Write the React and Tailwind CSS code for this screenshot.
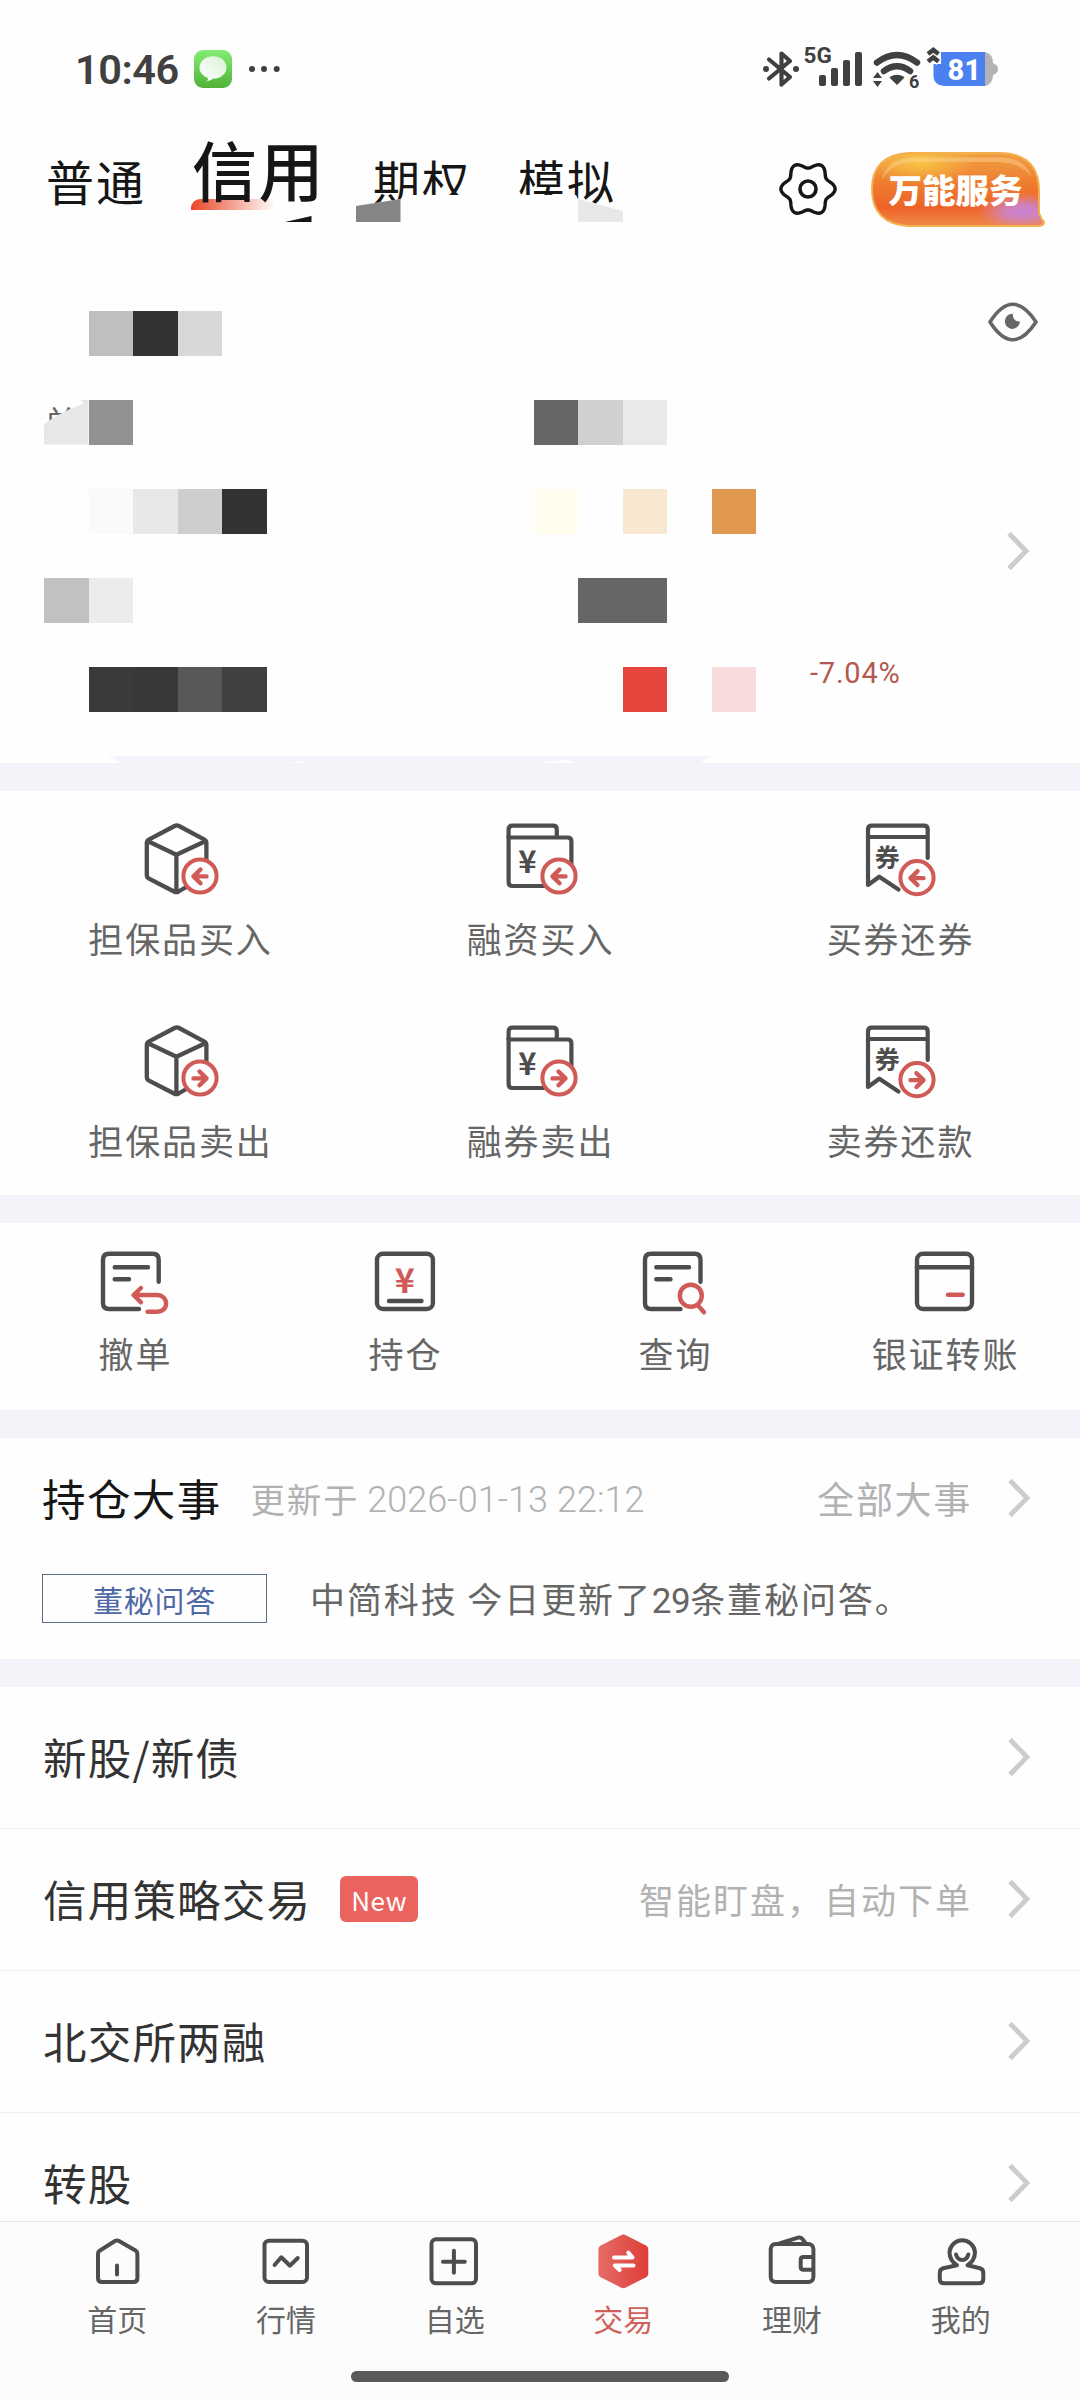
import React from "react";

const DARK = "#4d4d4d";
const RED = "#d05a55";

// Masked account figures, one entry per 44px cell (null = empty)
const maskedRows = [
  [null, null, "#bfbfbf", "#333333", "#d8d8d8"],
  [null, "label", "#929292", null, null, null, null, null, null, null, null, null, "#666666", "#d0d0d0", "#e9e9e9"],
  [null, null, "#fafafa", "#e8e8e8", "#cecece", "#333333", null, null, null, null, null, null, "#fffdee", null, "#f9e8d1", null, "#e0974f"],
  [null, "#c1c1c1", "#ececec", null, null, null, null, null, null, null, null, null, null, "#666666", "#666666"],
  [null, null, "#3a3a3a", "#383838", "#585858", "#404040", null, null, null, null, null, null, null, null, "#e4463e", null, "#f8dcdd"],
];

const Chevron = () => (
  <svg width="26" height="42" viewBox="0 0 26 42" fill="none" className="shrink-0">
    <path d="M3 3.5 L20 21 L3 38.5" stroke="#cccccc" strokeWidth="4.8" />
  </svg>
);

const Divider = () => <div className="h-[28px] bg-[#f3f4f9]" />;

const CircleArrow = ({ cx, cy, dir }) => (
  <g stroke={RED} strokeWidth="4.4" strokeLinecap="round" strokeLinejoin="round">
    <circle cx={cx} cy={cy} r="16.6" fill="#fefefe" strokeWidth="4" />
    <g transform={`translate(${cx} ${cy}) scale(${dir === "in" ? 1 : -1} 1)`}>
      <path d="M6.5 .4 H-6 M.5 -6.5 L-6.5 .4 L.5 7.3" fill="none" />
    </g>
  </g>
);

const BoxIcon = ({ dir }) => (
  <svg width="84" height="80" viewBox="0 0 84 80" fill="none">
    <path
      d="M68.4 48 V23 Q68.4 20.5 66 19.3 L41 6 Q38.8 4.8 36.6 6 L11.2 19.3 Q8.8 20.5 8.8 23 V55 Q8.8 57.5 11 58.7 L36 71.5 Q38.4 72.7 40.6 71.5 L50 66 M9.5 21 L38.4 34.8 L67.8 21 M38.4 34.8 V71.5"
      stroke={DARK}
      strokeWidth="4.3"
      strokeLinejoin="round"
    />
    <CircleArrow cx={62} cy={56} dir={dir} />
  </svg>
);

const WalletIcon = ({ dir }) => (
  <svg width="84" height="80" viewBox="0 0 84 80" fill="none">
    <g stroke={DARK} strokeWidth="4.2">
      <path d="M10.6 18 V9.5 Q10.6 5.7 14.4 5.7 H55 Q58.8 5.7 58.8 9.5 V17" />
      <path d="M10.6 17.5 H69.6 Q73.4 17.5 73.4 21.3 V62 Q73.4 66 69.6 66 H14.4 Q10.6 66 10.6 62 Z" />
    </g>
    <text x="29.5" y="52.5" textAnchor="middle" fontSize="31" fontWeight="700" fill={DARK}>
      ¥
    </text>
    <CircleArrow cx={61} cy={56} dir={dir} />
  </svg>
);

const BondIcon = ({ dir }) => (
  <svg width="84" height="80" viewBox="0 0 84 80" fill="none">
    <path
      d="M69.7 38 V9.5 Q69.7 5.7 66 5.7 H13.8 Q10 5.7 10 9.5 V65 L21.3 56.7 L40.5 69.5 M10 17 H69.7"
      stroke={DARK}
      strokeWidth="4.2"
      strokeLinecap="round"
      strokeLinejoin="round"
    />
    <text x="29.3" y="47" textAnchor="middle" fontSize="25" fontWeight="700" fill={DARK}>
      券
    </text>
    <CircleArrow cx={59} cy={57.7} dir={dir} />
  </svg>
);

const CancelIcon = () => (
  <svg width="84" height="72" viewBox="0 0 84 72" fill="none" strokeWidth="4.4" strokeLinecap="round" strokeLinejoin="round">
    <path d="M65.7 35.7 V13.7 Q65.7 7.7 59.7 7.7 H16 Q10 7.7 10 13.7 V57 Q10 63 16 63 H46 M21.7 21.3 H55 M21.7 33.3 H36" stroke={DARK} />
    <path d="M48 42 L40.5 49 L48 56.3 M41 49 H64.5 A8.6 8.4 0 0 1 64.5 65.8 H54.5" stroke={RED} />
  </svg>
);

const HoldingIcon = () => (
  <svg width="84" height="72" viewBox="0 0 84 72" fill="none" strokeWidth="4.4" strokeLinecap="round">
    <rect x="14" y="7.7" width="55.9" height="55.3" rx="6" stroke={DARK} />
    <path d="M26 55 H58.5" stroke={DARK} />
    <text x="41.7" y="47" textAnchor="middle" fontSize="34" fontWeight="700" fill={RED}>
      ¥
    </text>
  </svg>
);

const QueryIcon = () => (
  <svg width="84" height="72" viewBox="0 0 84 72" fill="none" strokeWidth="4.4" strokeLinecap="round">
    <path d="M67.5 35.7 V13.7 Q67.5 7.7 61.5 7.7 H18 Q12 7.7 12 13.7 V57 Q12 63 18 63 H47.5 M23.3 21.3 H56 M23.3 33.3 H37.5" stroke={DARK} />
    <circle cx="57.8" cy="49.7" r="11" stroke={RED} />
    <path d="M65 59.5 L71 66.3" stroke={RED} />
  </svg>
);

const TransferIcon = () => (
  <svg width="84" height="72" viewBox="0 0 84 72" fill="none" strokeWidth="4.4" strokeLinecap="round">
    <rect x="14" y="7.7" width="55" height="55.3" rx="6" stroke={DARK} />
    <path d="M14 21.3 H69" stroke={DARK} />
    <path d="M45 48.7 H59.7" stroke={RED} />
  </svg>
);

const tradeActions = [
  { label: "担保品买入", icon: <BoxIcon dir="in" /> },
  { label: "融资买入", icon: <WalletIcon dir="in" /> },
  { label: "买券还券", icon: <BondIcon dir="in" /> },
  { label: "担保品卖出", icon: <BoxIcon dir="out" /> },
  { label: "融券卖出", icon: <WalletIcon dir="out" /> },
  { label: "卖券还款", icon: <BondIcon dir="out" /> },
];

const quickActions = [
  { label: "撤单", icon: <CancelIcon /> },
  { label: "持仓", icon: <HoldingIcon /> },
  { label: "查询", icon: <QueryIcon /> },
  { label: "银证转账", icon: <TransferIcon /> },
];

const listItems = [
  { label: "新股/新债" },
  { label: "信用策略交易", badge: "New", hint: "智能盯盘，自动下单" },
  { label: "北交所两融" },
  { label: "转股" },
];

const navItems = [
  {
    label: "首页",
    icon: (
      <path d="M30 33.5 V42.5 M28 9 Q30 7.8 32 9 L48.5 18.5 Q50.4 19.7 50.4 22 V46 Q50.4 50 46.4 50 H15 Q11 50 11 46 V22 Q11 19.7 13 18.5 Z" />
    ),
  },
  {
    label: "行情",
    icon: (
      <>
        <rect x="8.5" y="8.7" width="42.5" height="41.3" rx="4.5" />
        <path d="M18.6 33 L25.3 25.3 L34 33.7 L41.7 26" />
      </>
    ),
  },
  {
    label: "自选",
    icon: (
      <>
        <rect x="6.5" y="7.3" width="44.5" height="44" rx="4.5" />
        <path d="M28.9 18.7 V40.7 M18 29.7 H39.8" />
      </>
    ),
  },
  {
    label: "交易",
    active: true,
    icon: (
      <>
        <defs>
          <linearGradient id="navHex" x1="0" x2="1" y1="0" y2="0">
            <stop offset="0" stopColor="#e66c68" />
            <stop offset="1" stopColor="#de3d36" />
          </linearGradient>
        </defs>
        <path
          d="M28 3.2 Q30.4 2 32.8 3.2 L53 13.5 Q55.3 14.8 55.3 17.4 V41.5 Q55.3 44 53 45.2 L32.8 55.6 Q30.4 56.8 28 55.6 L7.7 45.2 Q5.4 44 5.4 41.5 V17.4 Q5.4 14.8 7.7 13.5 Z"
          fill="url(#navHex)"
          stroke="none"
        />
        <path d="M21 25.6 H39.5 L35.3 20.6 M40.5 33.5 H21.8 L26.7 38" stroke="#ffffff" />
      </>
    ),
  },
  {
    label: "理财",
    icon: (
      <>
        <rect x="8.7" y="12" width="42.7" height="38" rx="5" />
        <path d="M17.5 11.5 L36 5.7 Q39 4.8 40.7 7.3 L43.6 11.5 M51 25 H41.5 Q38.7 25 38.7 27.8 V35 Q38.7 37.7 41.5 37.7 H51" />
      </>
    ),
  },
  {
    label: "我的",
    icon: (
      <>
        <path d="M26 33.2 Q18.5 28.5 18.5 20 A12.8 12.8 0 0 1 44 20 Q44 28.5 36.5 33.2 L49 36.3 Q52.3 37.2 52.3 41 V47 Q52.3 51.3 48 51.3 H13 Q8.8 51.3 8.8 47 V41 Q8.8 37.2 12.2 36.3 Z" />
        <path d="M25 22.5 Q26.5 28 31.2 28 Q36 28 37.3 22.5" />
      </>
    ),
  },
];

const gearPoints = Array.from({ length: 120 }, (_, i) => {
  const a = (i / 120) * Math.PI * 2;
  const r = 24 + 3.1 * Math.cos(6 * a);
  return `${(30 + r * Math.cos(a)).toFixed(2)},${(30 + r * Math.sin(a)).toFixed(2)}`;
}).join(" ");

const StatusBar = () => (
  <div className="h-[138px] pl-[75px] pr-[81px] flex items-center justify-between text-[#404040]">
    <div className="flex items-center">
      <span className="w-[119px] pt-[2px] text-[41.5px] leading-none tracking-[-0.5px] font-semibold font-['Roboto',sans-serif]">10:46</span>
      <svg width="38" height="38" viewBox="0 0 38 38">
        <defs>
          <linearGradient id="msg" x1="0" x2="0" y1="0" y2="1">
            <stop offset="0" stopColor="#83ee74" />
            <stop offset="1" stopColor="#4fb236" />
          </linearGradient>
          <linearGradient id="bubble" x1="0" x2="1" y1="1" y2="0">
            <stop offset="0" stopColor="#ffffff" />
            <stop offset="1" stopColor="#d8f0d4" />
          </linearGradient>
        </defs>
        <rect width="38" height="38" rx="9" fill="url(#msg)" />
        <ellipse cx="19" cy="17.5" rx="13.5" ry="11.3" fill="url(#bubble)" />
        <path d="M14 27 Q14.5 30 12.5 31.5 Q17 31 19.5 28 Z" fill="#f4fbf3" />
      </svg>
      <svg width="32" height="8" viewBox="0 0 32 8" fill="#404040" className="ml-[16px]">
        <circle cx="4" cy="4" r="3" />
        <circle cx="16" cy="4" r="3" />
        <circle cx="28.7" cy="4" r="3" />
      </svg>
    </div>
    <svg width="238" height="60" viewBox="0 -7 238 60" fill="none" className="font-['Roboto',sans-serif]">
      {/* bluetooth */}
      <path d="M8 13.5 L29 31 L20.5 38.5 V7.5 L29 15 L8 32.5" stroke="#404040" strokeWidth="4.2" strokeLinecap="round" strokeLinejoin="round" />
      <circle cx="5" cy="23" r="3" fill="#404040" />
      <circle cx="35" cy="23" r="3" fill="#404040" />
      {/* mobile signal */}
      <text x="42.5" y="17" fontSize="22.5" fontWeight="700" fill="#404040">
        5G
      </text>
      <g fill="#404040">
        <rect x="58" y="29" width="7" height="11" rx="2" />
        <rect x="70" y="22" width="7" height="18" rx="2" />
        <rect x="82" y="14" width="7" height="26" rx="2" />
        <rect x="94" y="6" width="7" height="34" rx="2" />
      </g>
      {/* wifi */}
      <path d="M116 16.5 Q136 1.5 156 16.5" stroke="#404040" strokeWidth="6.5" strokeLinecap="round" />
      <path d="M123 25 Q136 15.5 149 25" stroke="#404040" strokeWidth="6.5" strokeLinecap="round" />
      <path d="M129.5 31.5 Q136 27.5 142.5 31.5 L136 38 Z" fill="#404040" stroke="#404040" strokeWidth="1.5" strokeLinejoin="round" />
      <path d="M112 32 L116.5 26 L121 32 Z M112 35 H121 L116.5 41 Z" fill="#404040" />
      <text x="148" y="41.5" fontSize="18" fontWeight="700" fill="#404040">
        6
      </text>
      {/* battery */}
      <g transform="translate(1 0)">
        <path d="M220 6 H223 Q231 8 231 17 Q236 19 236 23 Q236 27 231 29 Q231 38 223 40 H220 Z" fill="#b3b3b3" />
        <path d="M184 6 H223 V40 H184 Q171.5 40 171.5 29 V18 H179 V6 Z" fill="#4a80f0" />
        <text x="185.5" y="33.5" fontSize="29" fontWeight="800" fill="#ffffff">
          81
        </text>
        <path d="M165 8.5 L171 3.5 L177 8.5 M165 16 L171 11 L177 16" stroke="#fefefe" strokeWidth="8" />
        <path d="M166 8 L171.3 4 L176.5 8 M166 15.5 L171.3 11.5 L176.5 15.5" stroke="#404040" strokeWidth="4.6" />
      </g>
    </svg>
  </div>
);

const Header = () => (
  <div className="relative h-[102px] pl-[46px] pr-[35px] flex items-center text-[#161616]">
    <div className="flex-1 flex items-center pb-[18px]">
      <span className="w-[146px] text-[48px] leading-[60px] tracking-[2px]">普通</span>
      <span className="w-[181px] -mt-[24px] text-[65px] leading-[80px] tracking-[1.5px] font-medium relative">
        <span className="absolute -left-[1px] -bottom-[2px] w-[84px] h-[11px] rounded-tl-[9px] bg-linear-to-r from-[#ea4727] to-transparent" />
        <span className="relative">信用</span>
      </span>
      <span className="w-[145px] text-[47px] leading-[60px] tracking-[2px]">期权</span>
      <span className="text-[47px] leading-[60px] tracking-[2px]">模拟</span>
    </div>
    {/* mosaic over the lower edge of the tabs */}
    <svg width="640" height="86" viewBox="0 0 640 86" className="absolute left-0 top-0">
      <path d="M356 68 L400.5 61 L404 57 H576 L578 61 L623 73 V86 H356 Z" fill="#fefefe" />
      <path d="M356 68 L400.5 61 V84 H356 Z" fill="#858587" />
      <path d="M578 61 L623 73 V84 H578 Z" fill="#e8e8e8" />
      <path d="M285 84 L311.5 78 V84 Z" fill="#161616" />
    </svg>
    <svg width="60" height="60" viewBox="0 0 60 60" fill="none" className="mr-[33px]">
      <polygon points={gearPoints} stroke="#161616" strokeWidth="3.4" />
      <circle cx="30" cy="30" r="8" stroke="#161616" strokeWidth="3.6" />
    </svg>
    <svg width="174" height="76" viewBox="0 0 174 76">
      <defs>
        <linearGradient id="pill" x1="0" x2="0" y1="0" y2="1">
          <stop offset="0" stopColor="#f0a044" />
          <stop offset=".45" stopColor="#ee7a2e" />
          <stop offset=".75" stopColor="#ee6228" />
          <stop offset="1" stopColor="#f08a4a" />
        </linearGradient>
        <radialGradient id="pillYellow" cx=".28" cy=".12" r=".32">
          <stop offset="0" stopColor="#f8c545" />
          <stop offset="1" stopColor="#f8c545" stopOpacity="0" />
        </radialGradient>
        <radialGradient id="pillPink" cx=".87" cy=".8" r=".26">
          <stop offset="0" stopColor="#c983d8" />
          <stop offset=".4" stopColor="#cc85cc" stopOpacity=".85" />
          <stop offset="1" stopColor="#d98aa8" stopOpacity="0" />
        </radialGradient>
        <path id="pillShape" d="M38 2 H130 Q168 3 168 40 V62 Q170 68 173 71 Q173 75 167 75 H38 Q1 73 1 38 Q1 4 38 2 Z" />
      </defs>
      <use href="#pillShape" fill="url(#pill)" />
      <use href="#pillShape" fill="url(#pillYellow)" />
      <use href="#pillShape" fill="url(#pillPink)" />
      <use href="#pillShape" fill="none" stroke="#f5b04e" strokeWidth="2" />
      <path d="M10 30 Q16 8 40 6.5 H130 Q154 7 161 26 Q150 12 128 11 H42 Q20 12 10 30 Z" fill="#ffd9a0" opacity=".4" />
      <text x="84.5" y="51.5" textAnchor="middle" fontSize="33.5" fontWeight="900" fill="#ffffff">
        万能服务
      </text>
    </svg>
  </div>
);

const MaskCell = ({ color }) => {
  if (color === "label") {
    return (
      <div className="relative w-[44.47px] h-full shrink-0">
        <span className="absolute left-0 -top-[1px] text-[33px] leading-[44px] text-[#666666]">单</span>
        <svg width="44.47" height="44.5" viewBox="0 0 44.47 44.5" className="absolute left-0 top-0">
          <path d="M0 24.5 L6 20 L16 14 L24 10 L40 3.5 L36 0 H44.47 V44.5 H0 Z" fill="#e7e7e7" />
        </svg>
      </div>
    );
  }
  return <div className="w-[44.47px] h-full shrink-0" style={{ backgroundColor: color || "transparent" }} />;
};

const AccountPanel = () => (
  <div className="relative h-[523px] pt-[71px]">
    <div className="flex flex-col gap-[44.5px]">
      {maskedRows.map((row, i) => (
        <div key={i} className="h-[44.5px] flex">
          {row.map((color, j) => (
            <MaskCell key={j} color={color} />
          ))}
          {i === 4 && (
            <span className="ml-[54px] -mt-[12px] text-[29px] leading-[36px] tracking-[0.8px] text-[#b4584f] font-['Roboto',sans-serif]">
              -7.04%
            </span>
          )}
        </div>
      ))}
    </div>
    <svg width="52" height="40" viewBox="0 0 52 40" fill="none" className="absolute left-[987px] top-[62px]">
      <path d="M3 20 Q25.7 -15.5 49 20 Q25.7 55.5 3 20 Z" stroke="#666666" strokeWidth="3.6" strokeLinejoin="round" />
      <path d="M25.7 11.7 A7.6 7.6 0 1 0 33 19.5 Q26 20 25.7 11.7 Z" fill="#666666" />
    </svg>
    <div className="absolute left-[1006px] top-[290px]">
      <Chevron />
    </div>
    <svg width="1080" height="7" viewBox="0 0 1080 7" className="absolute left-0 bottom-0">
      <path d="M108 0 H711 L700 7 H578 L565 3.5 L541 7 H308 L298 5.5 L287 7 H122 Z" fill="#f3f4f9" />
    </svg>
  </div>
);

const App = () => {
  return (
    <div className="w-[1080px] h-[2400px] flex flex-col overflow-hidden bg-[#fefefe] font-['Noto_Sans_CJK_SC',sans-serif]">
      <StatusBar />
      <Header />
      <AccountPanel />
      <Divider />

      <div className="h-[404px] pt-[29px] grid grid-cols-3 grid-rows-[202px_170px]">
        {tradeActions.map(({ label, icon }) => (
          <div key={label} className="flex flex-col items-center">
            {icon}
            <span className="mt-[16px] pl-[1px] text-[35px] leading-[44px] tracking-[1.9px] text-[#666666]">{label}</span>
          </div>
        ))}
      </div>
      <Divider />

      <div className="h-[187px] pt-[23px] grid grid-cols-4">
        {quickActions.map(({ label, icon }) => (
          <div key={label} className="flex flex-col items-center">
            {icon}
            <span className="mt-[13px] pl-[1px] text-[35px] leading-[44px] tracking-[1.9px] text-[#666666]">{label}</span>
          </div>
        ))}
      </div>
      <Divider />

      <div className="h-[221px] pl-[42px] pr-[47px]">
        <div className="pt-[30px] flex items-center">
          <span className="text-[43.5px] leading-[56px] tracking-[1.4px] text-[#161616]">持仓大事</span>
          <span className="ml-[29px] text-[34.5px] leading-[56px] tracking-[1.7px] text-[#b2b2b2]">更新于</span>
          <span className="ml-[8px] pt-[4px] text-[36px] leading-[56px] tracking-[0.05px] text-[#b2b2b2] font-['Roboto',sans-serif] font-light">
            2026-01-13 22:12
          </span>
          <span className="ml-auto mr-[35px] text-[37px] leading-[56px] tracking-[1.7px] text-[#b2b2b2]">全部大事</span>
          <Chevron />
        </div>
        <div className="pt-[43px] flex items-center">
          <span className="w-[225px] h-[49px] flex items-center justify-center border border-[#5d6e88] text-[30px] leading-none tracking-[0.8px] text-[#5069a6]">
            董秘问答
          </span>
          <span className="ml-[43px] pt-[2px] text-[35px] leading-[49px] tracking-[1.9px] text-[#666666]">
            中简科技 今日更新了
            <span className="font-['Roboto',sans-serif] tracking-[-0.5px]">29</span>
            条董秘问答。
          </span>
        </div>
      </div>
      <Divider />

      <div className="flex-1 overflow-hidden">
        {listItems.map(({ label, badge, hint }) => (
          <div key={label} className="h-[142px] pl-[43px] pr-[47px] pb-[1px] flex items-center border-b border-[#f1f1f1]">
            <span className="text-[43.5px] leading-[56px] tracking-[1.2px] text-[#333333]">{label}</span>
            {badge && (
              <span className="ml-[29px] w-[78px] h-[46px] pt-[2px] rounded-[6px] bg-[#ea635e] flex items-center justify-center text-[26px] leading-none tracking-[0.6px] text-white">
                {badge}
              </span>
            )}
            <span className="ml-auto mr-[35px] text-[35px] leading-[44px] tracking-[2px] text-[#b2b2b2]">{hint}</span>
            <Chevron />
          </div>
        ))}
      </div>

      <div className="h-[179px] shrink-0 border-t border-[#e4e4e4] bg-[#fcfcfc]">
        <div className="pt-[10px] pl-[33px] pr-[35px] grid grid-cols-6">
          {navItems.map(({ label, icon, active }) => (
            <div key={label} className="flex flex-col items-center">
              <svg width="60" height="60" viewBox="0 0 60 60" fill="none" stroke={DARK} strokeWidth="4" strokeLinecap="round" strokeLinejoin="round">
                {icon}
              </svg>
              <span className={active ? "mt-[7px] text-[30px] leading-[38px] text-[#d0605a]" : "mt-[7px] text-[30px] leading-[38px] text-[#666666]"}>
                {label}
              </span>
            </div>
          ))}
        </div>
        <div className="mt-[34px] mx-auto w-[378px] h-[11px] rounded-full bg-[#595959]" />
      </div>
    </div>
  );
};

export default App;
